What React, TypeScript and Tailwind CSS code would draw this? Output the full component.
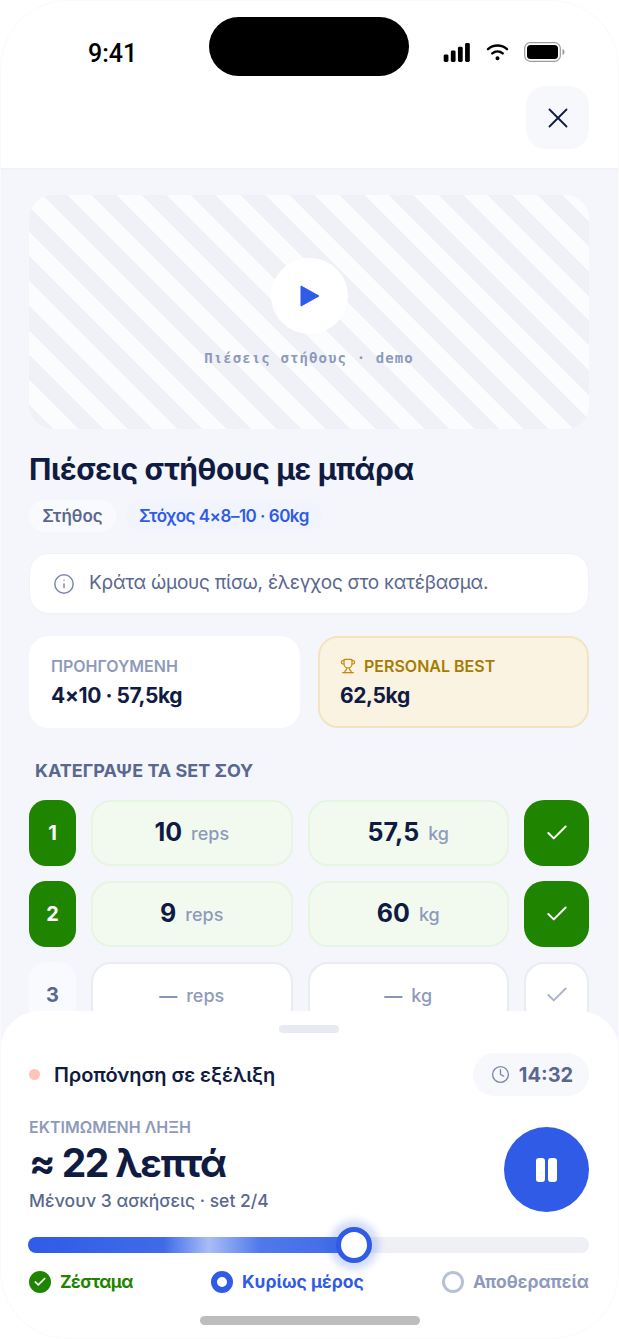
import { Check, Clock, Info, Trophy, X } from 'lucide-react';

type SetRow = { id: number; reps: string; kg: string; done: boolean };

const sets: SetRow[] = [
    { id: 1, reps: '10', kg: '57,5', done: true },
    { id: 2, reps: '9', kg: '60', done: true },
    { id: 3, reps: '—', kg: '—', done: false },
];

function StatusBar() {
    return (
        <div className="h-[86px] flex items-start justify-between relative">
            <span className="mt-[38px] ml-[88px] text-[25px] leading-[32px] font-medium font-['Roboto',sans-serif] text-black">9:41</span>
            {/* Dynamic island */}
            <div className="absolute left-[209px] top-[17px] w-[200px] h-[59px] rounded-full bg-black"></div>
            <div className="mt-[42px] mr-[53px] flex items-center gap-[15px]">
                <svg width="28" height="19" viewBox="0 0 28 20" fill="#000">
                    <rect x="0" y="12" width="5" height="8" rx="1.5" />
                    <rect x="7.500" y="8" width="5" height="12" rx="1.5" />
                    <rect x="15" y="4" width="5" height="16" rx="1.5" />
                    <rect x="22.500" y="0" width="5" height="20" rx="1.5" />
                </svg>
                <svg width="23" height="18" viewBox="0 0 24 19" fill="none" stroke="#000" strokeWidth="2.600" strokeLinecap="round">
                    <path d="M2 6.500c5.600-5 14.400-5 20 0" />
                    <path d="M6.500 11c3.200-2.800 7.800-2.800 11 0" />
                    <circle cx="12" cy="16" r="1.600" fill="#000" stroke="none" />
                    <circle cx="12" cy="16" r="0.800" />
                </svg>
                <svg width="42" height="20" viewBox="0 0 42 20" fill="none">
                    <rect x="0.700" y="0.700" width="35.600" height="18.600" rx="5.500" stroke="#9a9a9a" strokeWidth="1.200" />
                    <rect x="3" y="3" width="31" height="14" rx="3.500" fill="#000" />
                    <path d="M38.500 7v6c1.300-.4 2-1.600 2-3s-.7-2.600-2-3z" fill="#9a9a9a" />
                </svg>
            </div>
        </div>
    );
}

function SetCell({ value, unit, done }: { value: string; unit: string; done: boolean }) {
    return (
        <div className={`flex-1 h-[66px] rounded-[20px] border-2 flex items-center justify-center gap-[9px] ${done ? 'bg-[#f2faf0] border-[#e6f5e2]' : 'bg-white border-[#eaecf4]'}`}>
            <span className={`font-bold ${done ? 'text-[25px] text-[#101b42]' : 'text-[18px] text-[#8a94b5]'}`}>{value}</span>
            <span className="text-[18px] font-medium text-[#8f9abb]">{unit}</span>
        </div>
    );
}

export default function App() {
    return (
        <div className="relative w-[619px] h-[1339px] overflow-hidden bg-[#f4f6fb] font-['Inter','Noto_Sans',sans-serif] text-[#101b42]">
            {/* Header */}
            <div className="h-[170px] bg-white border-b-2 border-[#f0f2f8]">
                <StatusBar />
                <div className="flex justify-end pr-[30px]">
                    <button className="w-[63px] h-[63px] rounded-[20px] bg-[#f7f8fc] flex items-center justify-center text-[#101b42]">
                        <X size={34} strokeWidth={1.300} />
                    </button>
                </div>
            </div>

            <div className="pl-[29px] pr-[30px] pt-[25px]">
                {/* Video placeholder */}
                <div className="h-[234px] rounded-[24px] bg-[repeating-linear-gradient(45deg,#eff1f6_0px,#eff1f6_17.500px,#fbfcfe_17.500px,#fbfcfe_35px)] flex flex-col items-center pt-[63px]">
                    <div className="w-[77px] h-[76px] rounded-full bg-white flex items-center justify-center">
                        <svg width="20" height="22" viewBox="0 0 20 22" className="ml-[2px]">
                            <path d="M1 1v20l18-10z" fill="#2f5be7" stroke="#2f5be7" strokeLinejoin="round" />
                        </svg>
                    </div>
                    <p className="mt-[14px] text-[14px] leading-[20px] font-['DejaVu_Sans_Mono',monospace] font-bold tracking-[1.100px] text-[#8e99bb]">Πιέσεις στήθους · demo</p>
                </div>

                <h1 className="mt-[21px] text-[30px] leading-[38px] font-bold tracking-[-0.4px]">Πιέσεις στήθους με μπάρα</h1>

                <div className="mt-[12px] flex gap-[10px]">
                    <span className="h-[32px] w-[87px] pt-[1px] rounded-full bg-[#f9fafd] flex items-center justify-center text-[17px] font-semibold text-[#5a678f]">Στήθος</span>
                    <span className="h-[32px] px-[13px] pt-[1px] rounded-full bg-[#f1f4fd] flex items-center text-[17px] font-semibold tracking-[-0.5px] text-[#2f5be7]">Στόχος 4×8–10 · 60kg</span>
                </div>

                <div className="mt-[21px] h-[61px] rounded-[20px] bg-white flex items-center gap-[14px] pl-[23px] border border-[#f0f2f8]">
                    <Info size={22} strokeWidth={1.600} className="text-[#7c88ad]" />
                    <span className="text-[19px] tracking-[-0.25px] text-[#5a678f]">Κράτα ώμους πίσω, έλεγχος στο κατέβασμα.</span>
                </div>

                {/* Stats */}
                <div className="mt-[22px] grid grid-cols-2 gap-[18px]">
                    <div className="h-[92px] rounded-[20px] bg-white pl-[22px] pt-[20px]">
                        <p className="text-[16px] leading-[20px] font-semibold text-[#8f9abb]">ΠΡΟΗΓΟΥΜΕΝΗ</p>
                        <p className="mt-[6px] text-[21px] leading-[28px] font-bold tracking-[-0.45px]">4×10 · 57,5kg</p>
                    </div>
                    <div className="h-[92px] rounded-[20px] bg-[#fbf3e2] border-2 border-[#f3e4c1] pl-[20px] pt-[18px]">
                        <p className="flex items-center gap-[8px] text-[16px] leading-[20px] font-semibold text-[#a67c00]">
                            <Trophy size={16} strokeWidth={1.800} className="text-[#c08a10]" />
                            PERSONAL BEST
                        </p>
                        <p className="mt-[6px] text-[21px] leading-[28px] font-bold tracking-[-0.4px]">62,5kg</p>
                    </div>
                </div>

                <p className="mt-[31px] ml-[6px] text-[18px] leading-[24px] font-bold text-[#5a678f]">ΚΑΤΕΓΡΑΨΕ ΤΑ SET ΣΟΥ</p>

                {/* Set rows */}
                <div className="mt-[17px] flex flex-col gap-[15px]">
                    {sets.map((s) => (
                        <div key={s.id} className="flex gap-[15px]">
                            <div className={`w-[47px] h-[66px] rounded-[17px] flex items-center justify-center text-[20px] font-bold ${s.done ? 'bg-[#1f8500] text-white' : 'bg-[#f9fafd] text-[#5a678f]'}`}>{s.id}</div>
                            <SetCell value={s.reps} unit="reps" done={s.done} />
                            <SetCell value={s.kg} unit="kg" done={s.done} />
                            <div className={`w-[65px] h-[66px] rounded-[20px] flex items-center justify-center ${s.done ? 'bg-[#1f8500] text-white' : 'bg-white border-2 border-[#eaecf4] text-[#aab3cd]'}`}>
                                <Check size={26} strokeWidth={1.800} />
                            </div>
                        </div>
                    ))}
                </div>
            </div>

            {/* Bottom sheet */}
            <div className="absolute left-0 right-0 bottom-0 h-[328px] rounded-t-[40px] bg-white pl-[29px] pr-[30px] pt-[14px]">
                <div className="mx-auto w-[60px] h-[8px] rounded-full bg-[#e8eaf3]"></div>

                <div className="mt-[20px] flex items-center justify-between">
                    <div className="flex items-center gap-[14px]">
                        <span className="w-[11px] h-[11px] rounded-full bg-[#ffc4b8]"></span>
                        <span className="text-[20px] font-semibold tracking-[-0.1px]">Προπόνηση σε εξέλιξη</span>
                    </div>
                    <div className="h-[43px] w-[116px] rounded-full bg-[#f7f8fc] flex items-center justify-center gap-[9px] pl-[2px]">
                        <Clock size={19} strokeWidth={1.700} className="text-[#7c88ad]" />
                        <span className="text-[20px] font-bold text-[#5a678f]">14:32</span>
                    </div>
                </div>

                <div className="mt-[20px] flex justify-between items-start">
                    <div>
                        <p className="mt-[1px] text-[16px] leading-[20px] font-semibold text-[#8f9abb]">ΕΚΤΙΜΩΜΕΝΗ ΛΗΞΗ</p>
                        <p className="text-[39px] leading-[51px] font-bold tracking-[-1.500px]">≈ 22 λεπτά</p>
                        <p className="mt-[2px] text-[17.500px] leading-[22px] font-medium text-[#5a678f]">Μένουν 3 ασκήσεις · set 2/4</p>
                    </div>
                    <div className="mt-[11px] w-[85px] h-[85px] rounded-full bg-[#2f5be7] flex items-center justify-center gap-[2.500px]">
                        <span className="w-[9.500px] h-[24px] rounded-[3px] bg-white"></span>
                        <span className="w-[9.500px] h-[24px] rounded-[3px] bg-white"></span>
                    </div>
                </div>

                {/* Progress */}
                <div className="relative -ml-[1px] mt-[25px] h-[16px] rounded-full bg-[#eef0f6]">
                    <div className="h-full w-[323px] rounded-full bg-[linear-gradient(90deg,#2f5be7_0%,#3f6be9_42%,#a9bcf5_56%,#4f78ea_72%,#3f6be8_100%)]"></div>
                    <div className="absolute left-[308px] top-[-10px] w-[36px] h-[36px] rounded-full bg-white border-[5px] border-[#2f5be7] shadow-[0_0_7px_7px_rgba(47,91,231,0.2)]"></div>
                </div>

                <div className="mt-[16px] flex justify-between items-center">
                    <div className="flex items-center gap-[9px]">
                        <span className="w-[22px] h-[22px] rounded-full bg-[#1f8500] flex items-center justify-center text-white">
                            <Check size={14} strokeWidth={3} />
                        </span>
                        <span className="text-[17.500px] font-bold tracking-[-0.6px] text-[#1f8500]">Ζέσταμα</span>
                    </div>
                    <div className="flex items-center gap-[9px]">
                        <span className="w-[22px] h-[22px] rounded-full border-[6px] border-[#2f5be7] bg-white"></span>
                        <span className="text-[17.500px] font-bold text-[#2f5be7]">Κυρίως μέρος</span>
                    </div>
                    <div className="flex items-center gap-[9px]">
                        <span className="w-[22px] h-[22px] rounded-full border-[3px] border-[#b8c0d8] bg-white"></span>
                        <span className="text-[17.500px] font-bold text-[#8f9abb]">Αποθεραπεία</span>
                    </div>
                </div>

                <div className="absolute left-[200px] bottom-[14px] w-[220px] h-[9px] rounded-full bg-[#bdbdbd]"></div>
            </div>

            {/* Faint device outline */}
            <div className="absolute inset-0 rounded-[68px] border border-[#fafafb] pointer-events-none"></div>
        </div>
    );
}
